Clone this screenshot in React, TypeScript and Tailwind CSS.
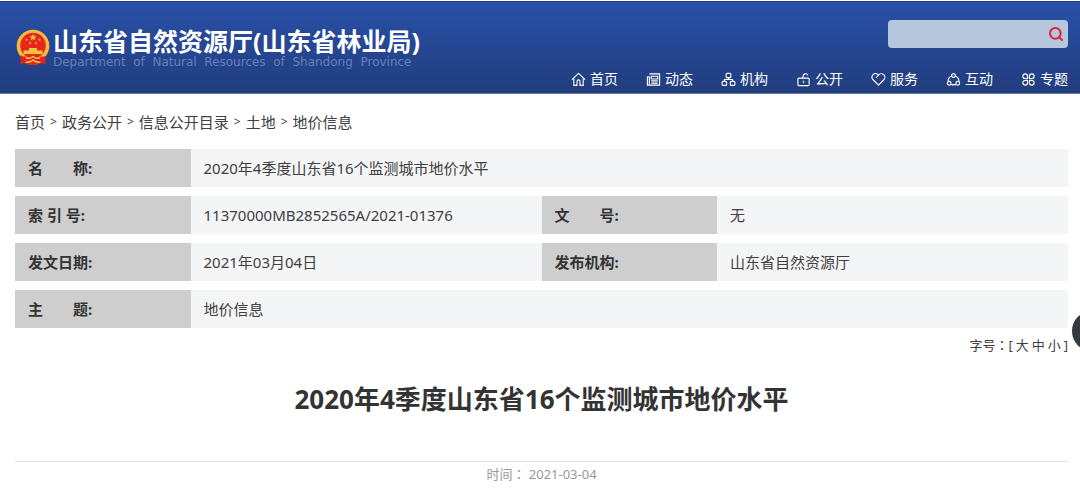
import { useState } from 'react'
import type { ReactNode } from 'react'
import { Search } from 'lucide-react'

interface NavItem {
  label: string
  icon: ReactNode
}

const navItems: NavItem[] = [
  {
    label: '首页',
    icon: (
      <>
        <path d="M1 8.2 8 1.5l7 6.7" />
        <path d="M3 7v7.3h3.4V10a1.6 1.6 0 0 1 3.2 0v4.3H13V7" />
      </>
    ),
  },
  {
    label: '动态',
    icon: (
      <>
        <path d="M3.5 2h11v12h-13V5h2v8" />
        <path d="M5.5 4.5h7v3h-7zM5.5 9.5h7M5.5 11.8h7" />
      </>
    ),
  },
  {
    label: '机构',
    icon: (
      <>
        <rect x="5.5" y="1.5" width="5" height="4.5" rx="1" />
        <rect x="1.2" y="10" width="4.8" height="4.3" rx="1" />
        <rect x="10" y="10" width="4.8" height="4.3" rx="1" />
        <path d="M8 6v2M3.6 10V8h8.8v2" />
      </>
    ),
  },
  {
    label: '公开',
    icon: (
      <>
        <rect x="2" y="6.5" width="12" height="8" rx="1.2" />
        <path d="M7.5 6.5V4.6a2.7 2.7 0 0 1 5.2-1M8 9.2v2.6" />
      </>
    ),
  },
  {
    label: '服务',
    icon: <path d="M8 14 2 8a3.8 3.8 0 0 1 5.3-5.4L8 3.3a3.8 3.8 0 0 1 6 4.7zM8 3.3 5.4 6" />,
  },
  {
    label: '互动',
    icon: (
      <>
        <circle cx="8" cy="3.7" r="2" />
        <circle cx="3.4" cy="12" r="2" />
        <circle cx="12.6" cy="12" r="2" />
        <path d="M6 4.2a6 6 0 0 0-3.8 5.5M10 4.2a6 6 0 0 1 3.8 5.5M5.5 13.2a6 6 0 0 0 5 0" />
      </>
    ),
  },
  {
    label: '专题',
    icon: (
      <>
        <path d="M7 7H4.4A2.5 2.5 0 1 1 7 4.4zM9 7V4.4A2.5 2.5 0 1 1 11.6 7z" />
        <path d="M7 9v2.6A2.5 2.5 0 1 1 4.4 9zM9 9h2.6A2.5 2.5 0 1 1 9 11.6z" />
      </>
    ),
  },
]

const crumbs = ['首页', '政务公开', '信息公开目录', '土地', '地价信息']

const infoRows = [
  [{ label: '名　　称:', value: '2020年4季度山东省16个监测城市地价水平' }],
  [
    { label: '索 引 号:', value: '11370000MB2852565A/2021-01376' },
    { label: '文　　号:', value: '无' },
  ],
  [
    { label: '发文日期:', value: '2021年03月04日' },
    { label: '发布机构:', value: '山东省自然资源厅' },
  ],
  [{ label: '主　　题:', value: '地价信息' }],
]

function Emblem() {
  return (
    <svg viewBox="0 0 34 36" className="h-9 w-[34px] shrink-0" aria-hidden="true">
      <circle cx="17" cy="17" r="16.3" fill="#f6bd3a" />
      <circle cx="17" cy="16.5" r="12.8" fill="#e8251f" />
      <path d="m17 4.8 1 2.4 2.6.1-2 1.7.7 2.5-2.3-1.4-2.3 1.4.7-2.5-2-1.7 2.6-.1z" fill="#f9c63d" />
      <g fill="#f6a93a">
        <circle cx="10.5" cy="10.8" r="1.1" />
        <circle cx="23.5" cy="10.8" r="1.1" />
        <circle cx="14" cy="14.2" r="1.1" />
        <circle cx="20" cy="14.2" r="1.1" />
      </g>
      <path d="M13 19h8v2.5h-8zM7.5 21.5h19V25h-19z" fill="#f9c63d" />
      <path d="M4.500 26c3 2 6 2 9 .5h7c3 1.500 6 1.500 9 .5v8l-5-1-3 2h-9l-3-2-5 1z" fill="#e3231d" />
      <path d="M10 28.500c2.500 1.500 4.500 1 7-1 2.500 2 4.500 2.500 7 1" fill="none" stroke="#f9c63d" strokeWidth="1.500" />
      <path d="M9.500 33.500c3-.5 5 0 7.500-2.500 2.500 2.500 4.500 2 7.500 2.500" fill="none" stroke="#f9c63d" strokeWidth="1.500" />
    </svg>
  )
}

function Header() {
  return (
    <header className="mt-px border-t border-b border-t-[#1f4079] border-b-[#6478b0] bg-gradient-to-b from-[#2950a9] to-[#213d7d] pr-3 pl-4 text-white">
      <div className="flex items-start justify-between">
        <a href="#" className="flex items-center pt-6">
          <Emblem />
          <span className="flex flex-col pl-[3px]">
            <span className="text-[25px] leading-[30px] font-bold whitespace-nowrap">山东省自然资源厅(山东省林业局)</span>
            <span className="font-['DejaVu_Sans'] text-xs leading-3 whitespace-pre text-[#6780ba]">
              {'Department  of  Natural  Resources  of  Shandong  Province'}
            </span>
          </span>
        </a>
        <form className="mt-[18px] flex h-7 w-[180px] items-center rounded bg-[#b6c6dd] pr-1" onSubmit={e => e.preventDefault()}>
          <input type="text" aria-label="搜索" className="h-full min-w-0 flex-1 bg-transparent px-2 text-sm text-[#333] outline-none" />
          <button type="submit" aria-label="搜索" className="text-[#dc2732]">
            <Search className="size-4" strokeWidth={3} />
          </button>
        </form>
      </div>
      <nav className="flex justify-end gap-7 pt-px pb-1">
        {navItems.map(item => (
          <a key={item.label} href="#" className="flex items-center gap-1 text-sm leading-5">
            <svg viewBox="0 0 16 16" className="size-[15px]" fill="none" stroke="currentColor" strokeWidth="1.2" strokeLinejoin="round" aria-hidden="true">
              {item.icon}
            </svg>
            {item.label}
          </a>
        ))}
      </nav>
    </header>
  )
}

export default function App() {
  const [fontSize, setFontSize] = useState('中')

  return (
    <div className="relative overflow-hidden bg-white font-['Noto_Sans','Noto_Sans_CJK_SC',sans-serif] text-[#404040]">
      <Header />

      <main className="pr-3 pl-[15px]">
        <nav className="flex gap-[5px] pt-[18px] text-[15px] leading-5">
          {crumbs.map((crumb, i) => (
            <span key={crumb} className="flex gap-[5px]">
              {i > 0 && <span className="text-xs leading-5">&gt;</span>}
              <a href="#">{crumb}</a>
            </span>
          ))}
        </nav>

        <table className="mt-2 w-full table-fixed border-separate border-spacing-x-0 border-spacing-y-[9px] text-left text-[15px]">
          <colgroup>
            <col className="w-1/6" />
            <col className="w-1/3" />
            <col className="w-1/6" />
            <col className="w-1/3" />
          </colgroup>
          <tbody>
            {infoRows.map(row => (
              <tr key={row[0].label} className="h-[38px]">
                {row.map(cell => [
                  <th key={cell.label} scope="row" className="bg-[#cecece] px-[13px] font-bold text-[#333]">
                    {cell.label}
                  </th>,
                  <td key={cell.value} colSpan={row.length === 1 ? 3 : 1} className="bg-[#f4f5f7] px-[13px]">
                    {cell.value}
                  </td>,
                ])}
              </tr>
            ))}
          </tbody>
        </table>

        {/* 字号切换 */}
        <div className="flex justify-end gap-[3px] font-['Noto_Sans','Noto_Sans_CJK_TC',sans-serif] text-[13px] leading-4">
          <span>字号：[</span>
          {['大', '中', '小'].map(size => (
            <button key={size} type="button" aria-pressed={fontSize === size} onClick={() => setFontSize(size)}>
              {size}
            </button>
          ))}
          <span>]</span>
        </div>

        <h1 className="border-b border-[#e6e6e6] pt-7 pb-11 text-center text-[26px] leading-9 font-bold text-[#333]">
          2020年4季度山东省16个监测城市地价水平
        </h1>
        <p className="pt-1 text-center font-['Noto_Sans','Noto_Sans_CJK_TC',sans-serif] text-[13px] leading-4 text-[#999]">
          时间： 2021-03-04
        </p>
      </main>

      <button type="button" aria-label="工具" className="absolute top-[311px] -right-8 size-10 rounded-full bg-[#333841] shadow" />
    </div>
  )
}
